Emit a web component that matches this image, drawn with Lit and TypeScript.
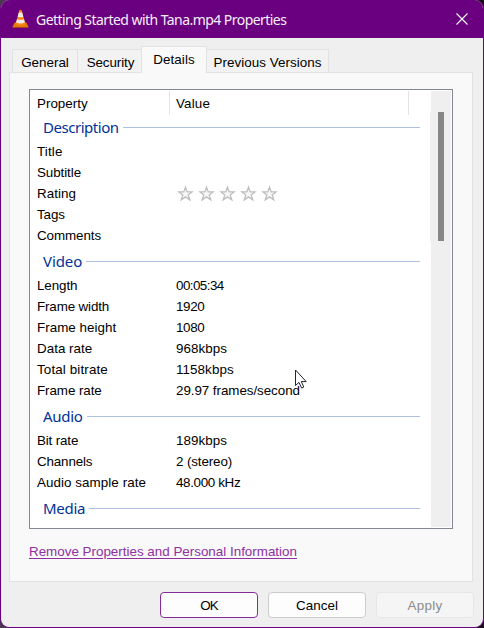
import { LitElement, html, css, svg } from "lit";
import { customElement } from "lit/decorators.js";
import { styleMap } from "lit/directives/style-map.js";

/** nt / vt / t: tracking of the label, the value and the group title, in px. */
interface Row { name: string; value?: string; rating?: boolean; nt?: number; vt?: number }
interface Group { title: string; t: number; rows: Row[] }

const GROUPS: Group[] = [
  { title: "Description", t: -0.46, rows: [
    { name: "Title", nt: 0.15 }, { name: "Subtitle", nt: -0.08 }, { name: "Rating", rating: true, nt: 0.05 }, { name: "Tags" }, { name: "Comments" },
  ] },
  { title: "Video", t: -0.1, rows: [
    { name: "Length", value: "00:05:34", nt: -0.08, vt: -0.55 },
    { name: "Frame width", value: "1920", nt: -0.14, vt: -0.35 },
    { name: "Frame height", value: "1080", nt: 0.02, vt: -0.35 },
    { name: "Data rate", value: "968kbps", nt: 0.02, vt: 0.04 },
    { name: "Total bitrate", value: "1158kbps", nt: 0.13, vt: 0.08 },
    { name: "Frame rate", value: "29.97 frames/second", vt: -0.06 },
  ] },
  { title: "Audio", t: -0.3, rows: [
    { name: "Bit rate", value: "189kbps", nt: -0.15, vt: 0.04 },
    { name: "Channels", value: "2 (stereo)", nt: -0.15, vt: -0.12 },
    { name: "Audio sample rate", value: "48.000 kHz", nt: 0.06, vt: -0.35 },
  ] },
  { title: "Media", t: -0.3, rows: [] },
];

const tracking = (t = -0.08) => styleMap({ letterSpacing: `${t}px` });

const cone = svg`
  <path d="M2.6 13.4 H14.4 L16.6 18.2 H.4 Z" fill="#e8780c"/>
  <path d="M.4 18.2 H16.6 V19 H.4 Z" fill="#a94f08"/>
  <path d="M7.4 1.2 Q8.5 .4 9.6 1.2 L13.4 15 Q8.5 18 3.6 15 Z" fill="#f58a12"/>
  <path d="M6.8 3.6 H10.2 L11.3 7.7 Q8.5 8.9 5.7 7.7 Z" fill="#ececec"/>
  <path d="M5 10.3 Q8.5 11.8 12 10.3 L12.9 13.5 Q8.5 15.6 4.1 13.5 Z" fill="#ececec"/>`;

const star = html`<svg class="star" viewBox="0 0 17 17" width="17" height="17">
  <path d="M8.5 2.2 L10.2 6.9 H15 L11.2 9.9 L12.8 14.9 L8.5 11.9 L4.2 14.9 L5.8 9.9 L2 6.9 H6.8 Z"
    fill="#f8f8f8" stroke="#bebebe" stroke-width="1.3"/></svg>`;

@customElement("app-root")
export class AppRoot extends LitElement {
  static styles = css`
    :host { display: block; width: 484px; height: 628px; background: linear-gradient(90deg, #4a3a50, #161018); overflow: hidden; }
    * { box-sizing: border-box; }
    .window {
      position: relative; height: 628px; display: flex; flex-direction: column;
      border: 1px solid #6a007f; border-top: 0; border-radius: 9px; overflow: hidden;
      background: #efefef; color: #000; font: 13.4px/21px "Liberation Sans", Arial, sans-serif; letter-spacing: -.08px;
    }
    .titlebar { height: 38px; flex: none; display: flex; align-items: center; background: #6a007f; color: #f6effa; padding: 0 14px 0 11px; }
    .cone { width: 17px; height: 20px; display: block; margin-right: 7px; }
    .caption { flex: 1; font: 14px/20px "Noto Sans", sans-serif; letter-spacing: -.55px; white-space: nowrap; padding-top: 2px; }
    .close { width: 14px; height: 14px; display: block; }
    .tabs { display: flex; align-items: flex-end; height: 34px; flex: none; padding-left: 11px; }
    .tab { height: 23px; border: 1px solid #e2e2e2; border-bottom: 0; border-left-width: 0; background: #f2f2f2; text-align: center; line-height: 25px; white-space: nowrap; }
    .general { width: 66px; border-left-width: 1px; letter-spacing: 0; }
    .security { width: 63px; border-right: 0; padding-left: 2px; }
    .details { width: 66px; height: 27px; margin-bottom: -1px; border-left-width: 1px; background: #f9f9f9; line-height: 26px; z-index: 1; letter-spacing: .08px; }
    .previous { width: 122px; letter-spacing: .04px; }
    .page { margin: 0 10px 0 8px; height: 510px; flex: none; border: 1px solid #e2e2e2; background: #f9f9f9; padding: 16px 19px 0; }
    .list { width: 424px; height: 440px; border: 1px solid #828790; background: #fff; display: flex; overflow: hidden; padding: 1px; }
    .content { width: 400px; flex: none; padding-left: 6px; margin-top: -1px; }
    .head { height: 22px; display: flex; }
    .head span { height: 24px; margin-top: 1px; border-right: 1px solid #e3e3e3; line-height: 25px; }
    .head .hname { width: 133px; letter-spacing: 0; }
    .head .hvalue { width: 239px; padding-left: 6px; letter-spacing: .15px; }
    .group { height: 29px; display: flex; align-items: flex-start; color: #003399; padding: 0 11px 0 6px; font: 15px/30px "Noto Sans", sans-serif; }
    .rule { flex: 1; height: 1px; background: #b0c0e2; margin: 15px 0 0 4px; }
    .row { height: 21px; display: flex; white-space: nowrap; }
    .name { width: 139px; }
    .stars { display: flex; gap: 4px; padding: 2px 0 0 1px; }
    .star { display: block; }
    .scroll { width: 21px; margin-left: -1px; flex: none; display: flex; flex-direction: column; align-items: flex-end; }
    .track { width: 20px; height: 21px; background: #efefef; }
    .thumb-lane { width: 21px; height: 129px; background: #efefef; padding-left: 8px; }
    .thumb { width: 6px; height: 129px; background: #868686; }
    .rest { width: 20px; flex: 1; background: #efefef; }
    .link { display: inline-block; margin-top: 13px; line-height: 19px; color: #8f2fa3; text-decoration: underline; text-underline-offset: 2px; text-decoration-thickness: 1px; letter-spacing: 0; white-space: nowrap; }
    .buttons { display: flex; gap: 10px; justify-content: flex-end; padding: 10px 9px 0 0; }
    button { width: 98px; height: 26px; padding: 0; border: 1px solid #cccccc; border-radius: 4px; background: #fdfdfd; color: #000; font: inherit; letter-spacing: .05px; }
    .ok { border-color: #852b98; letter-spacing: -.8px; }
    .apply { border-color: #e6e6e6; background: #f5f5f5; color: #8c8c8c; letter-spacing: .3px; }
    .cursor { position: absolute; left: 293px; top: 369px; width: 14px; height: 21px; }
  `;

  render() {
    return html`<div class="window">
      <header class="titlebar">
        <svg class="cone" viewBox="0 0 17 20">${cone}</svg>
        <span class="caption">Getting Started with Tana.mp4 Properties</span>
        <svg class="close" viewBox="0 0 14 14"><path d="M1.5 1.5 L12.5 12.5 M12.5 1.5 L1.5 12.5" stroke="#fff" stroke-width="1.1"/></svg>
      </header>
      <nav class="tabs">
        <div class="tab general">General</div>
        <div class="tab security">Security</div>
        <div class="tab details">Details</div>
        <div class="tab previous">Previous Versions</div>
      </nav>
      <section class="page">
        <div class="list">
          <div class="content">
            <div class="head"><span class="hname">Property</span><span class="hvalue">Value</span></div>
            ${GROUPS.map(g => html`
              <div class="group"><span style=${tracking(g.t)}>${g.title}</span><i class="rule"></i></div>
              ${g.rows.map(r => html`<div class="row">
                <span class="name" style=${tracking(r.nt)}>${r.name}</span>
                ${r.rating ? html`<span class="stars">${[1, 2, 3, 4, 5].map(() => star)}</span>` : html`<span style=${tracking(r.vt)}>${r.value ?? ""}</span>`}
              </div>`)}`)}
          </div>
          <div class="scroll">
            <div class="track"></div>
            <div class="thumb-lane"><div class="thumb"></div></div>
            <div class="rest"></div>
          </div>
        </div>
        <a class="link">Remove Properties and Personal Information</a>
      </section>
      <footer class="buttons">
        <button class="ok">OK</button><button>Cancel</button><button class="apply">Apply</button>
      </footer>
      <svg class="cursor" viewBox="0 0 14 21"><path d="M1.5 1 V16.5 L5 13.4 L7.6 19 L9.8 18 L7.3 12.6 H12.2 Z" fill="#fff" stroke="#222230" stroke-width="1"/></svg>
    </div>`;
  }
}
